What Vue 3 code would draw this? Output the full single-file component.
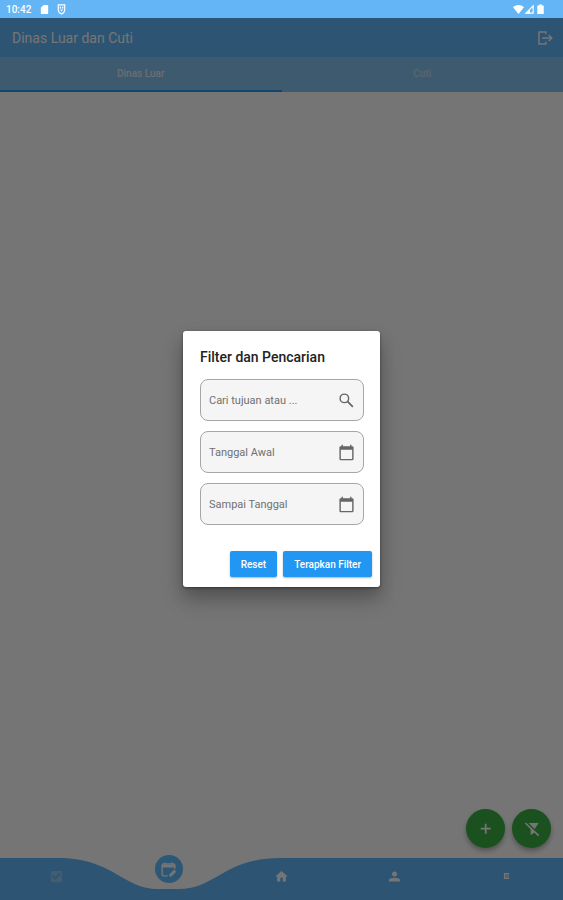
<template>
  <div class="app">
    <!-- Status bar -->
    <div class="status-bar">
      <span class="clock">10:42</span>
      <svg class="status-icon" viewBox="0 0 24 24"><path d="M18 2h-8L4 8v12c0 1 1 2 2 2h12c1 0 2-1 2-2V4c0-1-1-2-2-2z" /></svg>
      <svg class="status-icon shield" viewBox="0 0 24 24">
        <path d="M5 2h14v11c0 4-3 7-7 9-4-2-7-5-7-9z" fill="none" stroke="currentColor" stroke-width="2.5" />
        <path d="M8 6h3v4H8zM13 6h3v4h-3zM9 12h6l-3 5z" />
      </svg>
      <span class="spacer"></span>
      <svg class="status-icon" viewBox="0 0 24 24"><path d="M12 22 0 7c3-3 7-5 12-5s9 2 12 5z" /></svg>
      <svg class="status-icon" viewBox="0 0 24 24">
        <path d="M20 4v16H4z" fill="none" stroke="currentColor" stroke-width="2.5" />
        <path d="M13 12v9H4z" />
      </svg>
      <svg class="status-icon" viewBox="0 0 24 24"><path d="M9 1h6v2h4v19H5V3h4z" /></svg>
    </div>

    <!-- Page behind the dialog -->
    <div class="page">
      <header class="app-bar">
        <h1 class="app-title">Dinas Luar dan Cuti</h1>
        <button class="icon-button" aria-label="Keluar">
          <svg viewBox="0 0 24 24">
            <path d="M13 7V4H4v16h9v-3M8 12h13M17 8l4 4-4 4" fill="none" stroke="currentColor" stroke-width="2" />
          </svg>
        </button>
      </header>

      <nav class="tabs">
        <button
          v-for="tab in tabs"
          :key="tab"
          class="tab"
          :class="{ active: tab === activeTab }"
          @click="activeTab = tab"
        >{{ tab }}</button>
      </nav>

      <main class="content">
        <div class="fab-group">
          <button class="fab" aria-label="Tambah">
            <svg viewBox="0 0 24 24"><path d="M20 13h-7v7h-3v-7H3v-3h7V3h3v7h7z" /></svg>
          </button>
          <button class="fab" aria-label="Hapus filter">
            <svg viewBox="0 0 24 24">
              <path d="M22 3H7l9 9zM8 8l2 4v9l5-3v-3z" />
              <path d="M2 3l20 19" fill="none" stroke="currentColor" stroke-width="2.5" />
            </svg>
          </button>
        </div>
      </main>

      <nav class="bottom-nav">
        <svg class="nav-shape" viewBox="0 0 563 42" preserveAspectRatio="none">
          <path d="M0 0H57C114 0 122 31 159 31H179C216 31 224 0 281 0H563V42H0Z" />
        </svg>
        <button class="nav-item faded" aria-label="Presensi">
          <svg viewBox="0 0 24 24">
            <path d="M5 3h14a2 2 0 0 1 2 2v14a2 2 0 0 1-2 2H5a2 2 0 0 1-2-2V5a2 2 0 0 1 2-2zm5 14 9-9-2-2-7 7-3-3-2 2z" fill-rule="evenodd" />
          </svg>
        </button>
        <button class="nav-item current" aria-label="Dinas luar dan cuti">
          <span class="bubble">
            <svg viewBox="0 0 24 24">
              <path d="M11 21H5a2 2 0 0 1-2-2V6a2 2 0 0 1 2-2h14a2 2 0 0 1 2 2v5" fill="none" stroke="currentColor" stroke-width="2" />
              <path d="M3 5h18v4H3zM6 2h2v3H6zM16 2h2v3h-2zM13 19l7-7 3 3-7 7h-3z" />
            </svg>
          </span>
        </button>
        <button class="nav-item" aria-label="Beranda">
          <svg viewBox="0 0 24 24"><path d="M10 20v-6h4v6h5v-8h3L12 3 2 12h3v8z" /></svg>
        </button>
        <button class="nav-item" aria-label="Profil">
          <svg viewBox="0 0 24 24"><path d="M12 12a4 4 0 1 0 0-8 4 4 0 0 0 0 8zm0 2c-3 0-9 1-9 4v2h18v-2c0-3-6-4-9-4z" /></svg>
        </button>
        <button class="nav-item small" aria-label="Menu">
          <svg viewBox="0 0 24 24"><path d="M3 2h18v5H3zM3 10h18v4H3zM3 17h18v5H3zM3 2h4v20H3z" /></svg>
        </button>
      </nav>

      <!-- Filter dialog -->
      <div class="overlay">
        <form class="dialog" role="dialog" aria-labelledby="dialog-title" @submit.prevent>
          <h2 id="dialog-title" class="dialog-title">Filter dan Pencarian</h2>
          <label v-for="field in fields" :key="field.key" class="field">
            <input v-model="filter[field.key]" type="text" :placeholder="field.label" :aria-label="field.label" />
            <svg v-if="field.icon === 'search'" viewBox="0 0 24 24">
              <circle cx="9" cy="9" r="6" fill="none" stroke="currentColor" stroke-width="2" />
              <path d="M13 13l8 8" fill="none" stroke="currentColor" stroke-width="2.5" />
            </svg>
            <svg v-else viewBox="0 0 24 24">
              <path d="M20 3h-1V1h-2v2H7V1H5v2H4a2 2 0 0 0-2 2v16a2 2 0 0 0 2 2h16a2 2 0 0 0 2-2V5a2 2 0 0 0-2-2zm0 18H4V8h16z" fill-rule="evenodd" />
            </svg>
          </label>
          <div class="actions">
            <button type="button" class="action" @click="resetFilter">Reset</button>
            <button type="submit" class="action">Terapkan Filter</button>
          </div>
        </form>
      </div>
    </div>
  </div>
</template>

<script setup>
import { ref, reactive } from 'vue'

const tabs = ['Dinas Luar', 'Cuti']
const activeTab = ref('Dinas Luar')

const fields = [
  { key: 'keyword', label: 'Cari tujuan atau ...', icon: 'search' },
  { key: 'startDate', label: 'Tanggal Awal', icon: 'calendar' },
  { key: 'endDate', label: 'Sampai Tanggal', icon: 'calendar' }
]

const filter = reactive({ keyword: '', startDate: '', endDate: '' })

const resetFilter = () => {
  fields.forEach(field => {
    filter[field.key] = ''
  })
}
</script>

<style>
body {
  margin: 0;
}
</style>

<style scoped>
.app {
  display: flex;
  flex-direction: column;
  min-height: 100vh;
  font-family: Roboto, "Liberation Sans", sans-serif;
}

button {
  border: none;
  padding: 0;
  background: none;
  color: inherit;
  font-family: inherit;
  cursor: pointer;
}

svg {
  display: block;
  fill: currentColor;
}

/* Status bar */
.status-bar {
  display: flex;
  align-items: center;
  height: 18px;
  padding: 0 17px 0 6px;
  background: #64b5f6;
  color: #fff;
}

.clock {
  margin-right: 8px;
  font-size: 10px;
  font-weight: 500;
}

.status-icon {
  width: 11px;
  height: 11px;
}

.shield {
  margin-left: 6px;
}

.spacer {
  flex: 1;
}

/* Page */
.page {
  position: relative;
  flex: 1;
  display: flex;
  flex-direction: column;
  background: #fff;
}

.app-bar {
  display: flex;
  align-items: center;
  justify-content: space-between;
  height: 39px;
  padding: 0 9px 0 12px;
  background: #64b8fa;
  color: #fff;
}

.app-title {
  margin: 0;
  font-size: 14px;
  font-weight: 400;
}

.icon-button svg {
  width: 18px;
  height: 18px;
}

.tabs {
  display: flex;
  height: 35px;
  background: #88c5f2;
}

.tab {
  flex: 1;
  border-bottom: 2px solid transparent;
  color: #c4def2;
  font-size: 10px;
  font-weight: 500;
}

.tab.active {
  border-bottom-color: #2196f3;
  color: #e4f0fa;
}

.content {
  position: relative;
  flex: 1;
}

.fab-group {
  position: absolute;
  right: 12px;
  bottom: 10px;
  display: flex;
  gap: 7px;
}

.fab {
  display: flex;
  align-items: center;
  justify-content: center;
  width: 39px;
  height: 39px;
  border-radius: 50%;
  background: #3cb043;
  color: #fff;
  box-shadow: 0 3px 5px rgba(0, 0, 0, 0.3);
}

.fab svg {
  width: 16px;
  height: 16px;
}

.fab:first-child svg {
  width: 14px;
  height: 14px;
}

/* Bottom navigation */
.bottom-nav {
  position: relative;
  display: flex;
  height: 42px;
  color: #fff;
}

.nav-shape {
  position: absolute;
  inset: 0;
  width: 100%;
  height: 100%;
  color: #64b8fa;
}

.nav-item {
  position: relative;
  flex: 1;
  display: flex;
  align-items: center;
  justify-content: center;
  padding-bottom: 6px;
}

.nav-item svg {
  width: 15px;
  height: 15px;
}

.nav-item.faded {
  color: #90c8f4;
}

.nav-item.small svg {
  width: 7px;
  height: 8px;
}

.nav-item.current {
  align-items: flex-start;
}

.bubble {
  display: flex;
  align-items: center;
  justify-content: center;
  width: 28px;
  height: 28px;
  margin-top: -3px;
  border-radius: 50%;
  background: #62c0ff;
}

.nav-item .bubble svg {
  width: 17px;
  height: 17px;
}

/* Filter dialog */
.overlay {
  position: absolute;
  inset: 0;
  display: flex;
  align-items: center;
  justify-content: center;
  background: rgba(0, 0, 0, 0.54);
}

.dialog {
  box-sizing: border-box;
  width: 35%;
  min-width: 197px;
  padding: 17px 16px 10px 17px;
  border-radius: 3px;
  background: #fff;
  box-shadow: 0 10px 16px rgba(0, 0, 0, 0.2), 0 12px 24px rgba(0, 0, 0, 0.15), 0 1px 3px rgba(0, 0, 0, 0.4);
}

.dialog-title {
  margin: 0 0 13px;
  color: #222;
  font-size: 14px;
  font-weight: 500;
  line-height: 18px;
}

.field {
  box-sizing: border-box;
  display: flex;
  align-items: center;
  height: 42px;
  margin-bottom: 10px;
  padding: 0 8px;
  border: 1px solid #a6a6a6;
  border-radius: 8px;
  background: #f5f5f5;
  color: #666;
}

.field input {
  flex: 1;
  min-width: 0;
  padding: 0;
  border: none;
  outline: none;
  background: none;
  color: #333;
  font-family: inherit;
  font-size: 11px;
}

.field input::placeholder {
  color: #707070;
  opacity: 1;
}

.field svg {
  width: 17px;
  height: 17px;
}

.actions {
  display: flex;
  justify-content: flex-end;
  gap: 6px;
  margin: 26px -8px 0 0;
}

.action {
  height: 26px;
  padding: 0 11px;
  border-radius: 2px;
  background: #2196f3;
  color: #fff;
  font-size: 10px;
  font-weight: 500;
  box-shadow: 0 1px 2px rgba(0, 0, 0, 0.3);
}
</style>
